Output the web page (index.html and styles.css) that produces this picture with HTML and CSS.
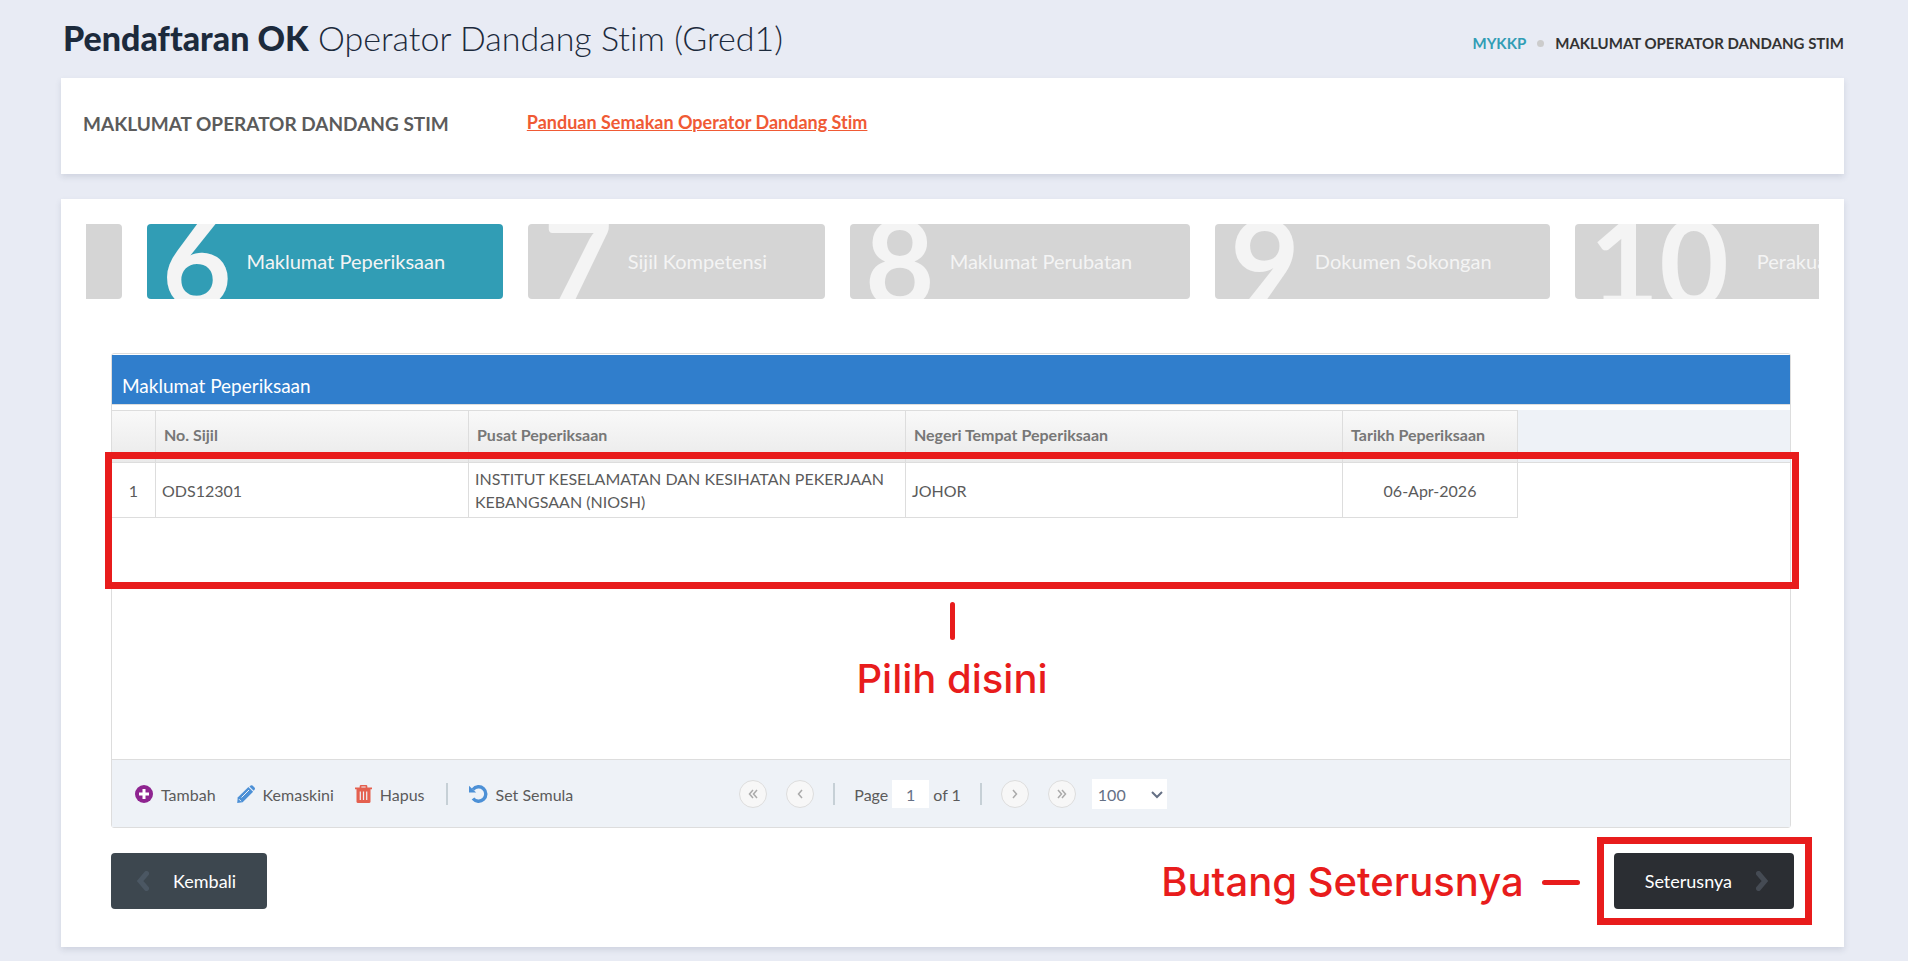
FILE: index.html
```html
<!DOCTYPE html>
<html lang="ms">
<head>
  <meta charset="UTF-8">
  <meta name="viewport" content="width=device-width, initial-scale=1.0">
  <title>Pendaftaran OK - Operator Dandang Stim (Gred1)</title>
  <link rel="stylesheet" href="styles.css">
</head>
<body>

<div class="page">

  <!-- Page header -->
  <header class="page-header">
    <h1><strong>Pendaftaran OK</strong> Operator Dandang Stim (Gred1)</h1>
    <nav class="breadcrumb">
      <a href="#">MYKKP</a>
      <span class="dot"></span>
      <span>MAKLUMAT OPERATOR DANDANG STIM</span>
    </nav>
  </header>

  <section class="card intro">
    <h2>MAKLUMAT OPERATOR DANDANG STIM</h2>
    <a class="guide-link" href="#">Panduan Semakan Operator Dandang Stim</a>
  </section>

  <main class="card wizard">

    <!-- Wizard steps -->
    <div class="steps">
      <div class="step step-cut"></div>
      <div class="step active"><span class="number">6</span><span>Maklumat Peperiksaan</span></div>
      <div class="step"><span class="number">7</span><span>Sijil Kompetensi</span></div>
      <div class="step"><span class="number">8</span><span>Maklumat Perubatan</span></div>
      <div class="step"><span class="number">9</span><span>Dokumen Sokongan</span></div>
      <div class="step step-wide"><span class="number">10</span><span>Perakuan</span></div>
    </div>

    <div class="content">

      <!-- Grid -->
      <div class="grid">
        <h3 class="grid-title">Maklumat Peperiksaan</h3>
        <div class="grid-body">
          <table>
            <colgroup>
              <col class="col-no">
              <col class="col-sijil">
              <col class="col-pusat">
              <col class="col-pusat">
              <col class="col-tarikh">
              <col>
            </colgroup>
            <thead>
              <tr>
                <th></th>
                <th>No. Sijil</th>
                <th>Pusat Peperiksaan</th>
                <th>Negeri Tempat Peperiksaan</th>
                <th>Tarikh Peperiksaan</th>
                <th class="filler"></th>
              </tr>
            </thead>
            <tbody>
              <tr>
                <td class="center">1</td>
                <td>ODS12301</td>
                <td>INSTITUT KESELAMATAN DAN KESIHATAN PEKERJAAN KEBANGSAAN (NIOSH)</td>
                <td>JOHOR</td>
                <td class="center">06-Apr-2026</td>
                <td class="filler"></td>
              </tr>
            </tbody>
          </table>
          <div class="row-mark">
            <div class="row-note">Pilih disini</div>
          </div>
        </div>

        <div class="toolbar">
          <div class="actions">
            <button type="button">
              <svg width="18" height="18" viewBox="0 0 18 18"><circle cx="9" cy="9" r="9" fill="#8e2490"/><path d="M9 4v10M4 9h10" stroke="#fff" stroke-width="3"/></svg>
              Tambah
            </button>
            <button type="button">
              <svg width="18" height="18" viewBox="0 0 18 18"><path d="M12.400 1.400l1.300-1q.9-.6 1.800.2l2 2q.9.900.2 1.800l-1 1.300z" fill="#4c90d6"/><path d="M11.400 2l4.700 4.700L5.600 17.200.2 18l.5-5.400z" fill="#4c90d6"/><path d="M4.500 12.500l7.500-7.500M2 14.200l2 2" stroke="#eef2f7" stroke-width="1"/></svg>
              Kemaskini
            </button>
            <button type="button">
              <svg width="17" height="18" viewBox="0 0 17 18"><path d="M0 3.300h17M5.500 3V1.500q0-.8.800-.8h4.400q.8 0 .8.800V3" fill="none" stroke="#e4604f" stroke-width="1.700"/><path d="M1.500 4h14v12.500q0 1.500-1.500 1.500H3q-1.500 0-1.500-1.500z" fill="#e4604f"/><path d="M5.300 6.500v8.500M8.500 6.500v8.500M11.700 6.500v8.500" stroke="#eef2f7" stroke-width="1.200"/></svg>
              Hapus
            </button>
            <span class="separator"></span>
            <button type="button">
              <svg width="19" height="18" viewBox="0 0 19 18"><path d="M4 4.500A7.200 7.200 0 1 1 4 13.500" fill="none" stroke="#4c90d6" stroke-width="3.400"/><path d="M0 .8v6.700h7.200z" fill="#4c90d6"/></svg>
              Set Semula
            </button>
          </div>

          <div class="pager">
            <button type="button" class="round" aria-label="First page">
              <svg width="10" height="10" viewBox="0 0 10 10"><path d="M5 1L1.500 5 5 9M9 1L5.500 5 9 9"/></svg>
            </button>
            <button type="button" class="round" aria-label="Previous page">
              <svg width="10" height="10" viewBox="0 0 10 10"><path d="M7 1L3.500 5 7 9"/></svg>
            </button>
            <span class="separator"></span>
            <div class="page-of">
              <label for="page">Page</label>
              <input id="page" type="text" value="1">
              <span>of 1</span>
            </div>
            <span class="separator"></span>
            <button type="button" class="round" aria-label="Next page">
              <svg width="10" height="10" viewBox="0 0 10 10"><path d="M3 1l3.500 4L3 9"/></svg>
            </button>
            <button type="button" class="round" aria-label="Last page">
              <svg width="10" height="10" viewBox="0 0 10 10"><path d="M1 1l3.500 4L1 9M5 1l3.500 4L5 9"/></svg>
            </button>
            <div class="page-size">
              <select aria-label="Rows per page">
                <option>50</option>
                <option selected>100</option>
              </select>
              <svg width="12" height="8" viewBox="0 0 12 8"><path d="M1 1l5 5 5-5"/></svg>
            </div>
          </div>
        </div>
      </div>

      <!-- Navigation buttons -->
      <div class="nav-buttons">
        <button type="button" class="btn btn-back">
          <svg width="12" height="20" viewBox="0 0 12 20"><path d="M9.500 2.500L3 10l6.500 7.500"/></svg>
          Kembali
        </button>
        <div class="next-mark">
          <span class="next-note">Butang Seterusnya</span>
          <button type="button" class="btn btn-next">
            Seterusnya
            <svg width="12" height="20" viewBox="0 0 12 20"><path d="M2.500 2.500L9 10l-6.500 7.500"/></svg>
          </button>
        </div>
      </div>

    </div>
  </main>
</div>

</body>
</html>
```
FILE: styles.css
```css
* {
  box-sizing: border-box;
}
body {
  margin: 0;
  background-color: #e8ebf4;
  color: #5b5b5b;
  font-family: Lato, "Open Sans", sans-serif;
  font-size: 16px;
  font-variant-ligatures: none;
  line-height: 23px;
}
h1, h2, h3 {
  margin: 0;
}
button, input, select {
  font: inherit;
  color: inherit;
}
button {
  border: none;
  background: none;
  padding: 0;
  cursor: pointer;
}
.page {
  padding: 0 64px 14px 61px;
}

/* Header */
.page-header {
  display: flex;
  justify-content: space-between;
  align-items: center;
  height: 78px;
  padding-left: 2px;
}
.page-header h1 {
  padding-bottom: 2px;
  color: #1c2a3c;
  font-size: 34px;
  line-height: 44px;
  font-weight: 300;
}
.page-header strong {
  font-weight: 900;
}
.breadcrumb {
  display: flex;
  align-items: center;
  gap: 11px;
  padding-top: 8px;
  color: #333;
  font-size: 15px;
  font-weight: 700;
}
.breadcrumb a {
  color: #319db5;
  text-decoration: none;
}
.breadcrumb .dot {
  width: 7px;
  height: 7px;
  border-radius: 50%;
  background-color: #ccc;
}

/* Cards */
.card {
  background-color: #fff;
  box-shadow: 0 3px 6px rgba(60, 70, 100, 0.14);
  margin-bottom: 25px;
}
.intro {
  display: flex;
  gap: 78px;
  padding: 33px 22px 38px;
}
.intro h2 {
  padding-top: 1px;
  font-size: 19px;
  line-height: 24px;
  font-weight: 700;
}
.guide-link {
  color: #f05a35;
  font-size: 18px;
  line-height: 22px;
  font-weight: 700;
}
.wizard {
  margin-bottom: 0;
  padding: 25px 25px 38px;
}

/* Steps */
.steps {
  display: flex;
  gap: 25px;
  overflow: hidden;
}
.step {
  display: flex;
  flex-shrink: 0;
  align-items: center;
  gap: 15px;
  height: 75px;
  padding: 0 58px 0 15px;
  border-radius: 4px;
  background-color: #d5d5d5;
  color: #f4f4f4;
  font-size: 20px;
  overflow: hidden;
}
.step .number {
  font-size: 120px;
  line-height: 75px;
  font-weight: 700;
}
.step.active {
  background-color: #319db5;
}
.step-wide {
  gap: 28px;
}
.step-cut {
  width: 36px;
  padding: 0;
  border-radius: 0 4px 4px 0;
}
.content {
  padding: 54px 25px 0;
}

/* Grid */
.grid {
  margin-right: 3px;
  border: 1px solid #ddd;
  border-radius: 3px;
}
.grid-title {
  margin-top: 1px;
  padding: 19px 10px 7px;
  border-bottom: 1px solid #ddd;
  background-color: #307ecc;
  color: #fff;
  font-size: 19px;
  line-height: 23px;
  font-weight: 400;
}
.grid-body {
  position: relative;
  height: 354px;
  padding-top: 5px;
}
.grid table {
  width: 100%;
  table-layout: fixed;
  border-collapse: separate;
  border-spacing: 0;
}
.col-no {
  width: 44px;
}
.col-sijil {
  width: 313px;
}
.col-pusat {
  width: 437px;
}
.col-tarikh {
  width: 175px;
}
.grid th {
  height: 53px;
  padding: 0 8px 4px;
  border: solid #ddd;
  border-width: 1px 1px 1px 0;
  background: linear-gradient(#f9f9f9, #eaeaea);
  color: #777;
  font-weight: 700;
  text-align: left;
}
.grid td {
  height: 55px;
  padding: 4px 6px;
  border: solid #ddd;
  border-width: 0 1px 1px 0;
}
.grid .center {
  text-align: center;
}
.grid th.filler {
  background: #eef2f7;
  border-width: 0 0 1px;
}
.grid td.filler {
  border: none;
}

/* Highlight over the table rows */
.row-mark {
  position: absolute;
  top: 47px;
  left: -7px;
  right: -9px;
  height: 137px;
  border: 7px solid #e81c1c;
}
.row-note {
  position: absolute;
  top: 100%;
  left: 0;
  right: 0;
  padding-top: 20px;
  color: #e81c1c;
  font-family: Inter, sans-serif;
  font-size: 40px;
  font-weight: 500;
  line-height: 48px;
  text-align: center;
}
.row-note::before {
  content: "";
  display: block;
  width: 5px;
  height: 38px;
  margin: 0 auto 15px;
  border-radius: 3px;
  background-color: #e81c1c;
}

/* Toolbar */
.toolbar {
  display: flex;
  align-items: center;
  height: 68px;
  padding: 1px 0 0 23px;
  border-top: 1px solid #ddd;
  background-color: #eef2f7;
}
.actions, .pager, .actions button, .page-of {
  display: flex;
  align-items: center;
}
.actions {
  gap: 21px;
}
.actions button {
  gap: 8px;
}
.separator {
  width: 2px;
  height: 22px;
  background-color: #c6d0d6;
}
.pager {
  gap: 19px;
  margin-left: 166px;
}
.pager .round {
  display: flex;
  align-items: center;
  justify-content: center;
  width: 28px;
  height: 28px;
  border: 1px solid #ddd;
  border-radius: 50%;
  background-color: #f7f7f7;
}
.round svg {
  fill: none;
  stroke: #aaa;
  stroke-width: 1.5;
}
.page-of {
  gap: 4px;
}
.page-of input {
  width: 37px;
  height: 28px;
  padding: 0;
  border: none;
  background-color: #fff;
  color: #657085;
  text-align: center;
}
.page-size {
  position: relative;
  margin-left: -3px;
}
.page-size select {
  width: 75px;
  height: 30px;
  padding: 0 6px;
  border: none;
  border-radius: 0;
  background-color: #fff;
  color: #657085;
  appearance: none;
}
.page-size svg {
  position: absolute;
  top: 12px;
  right: 4px;
  fill: none;
  stroke: #657085;
  stroke-width: 2;
  pointer-events: none;
}

/* Buttons */
.nav-buttons {
  display: flex;
  justify-content: space-between;
  padding-top: 25px;
}
.btn {
  display: flex;
  align-items: center;
  gap: 24px;
  height: 56px;
  border-radius: 4px;
  color: #fff;
  font-size: 18px;
}
.btn svg {
  fill: none;
  stroke: #4b5763;
  stroke-width: 5;
  stroke-linecap: round;
}
.btn-back {
  padding: 0 31px 0 26px;
  background-color: #3d474f;
}
.btn-next {
  padding: 0 26px 0 31px;
  background-color: #2b2e33;
}
.btn-next svg {
  stroke: #454b54;
}
.next-mark {
  position: relative;
}
.next-mark::before {
  content: "";
  position: absolute;
  inset: -16px -18px -16px -17px;
  border: 7px solid #e81c1c;
  pointer-events: none;
}
.next-note {
  position: absolute;
  top: 5px;
  right: calc(100% + 34px);
  display: flex;
  align-items: center;
  gap: 18px;
  color: #e81c1c;
  font-family: Inter, sans-serif;
  font-size: 40px;
  font-weight: 500;
  line-height: 48px;
  white-space: nowrap;
}
.next-note::after {
  content: "";
  width: 38px;
  height: 5px;
  border-radius: 3px;
  background-color: #e81c1c;
}
```
